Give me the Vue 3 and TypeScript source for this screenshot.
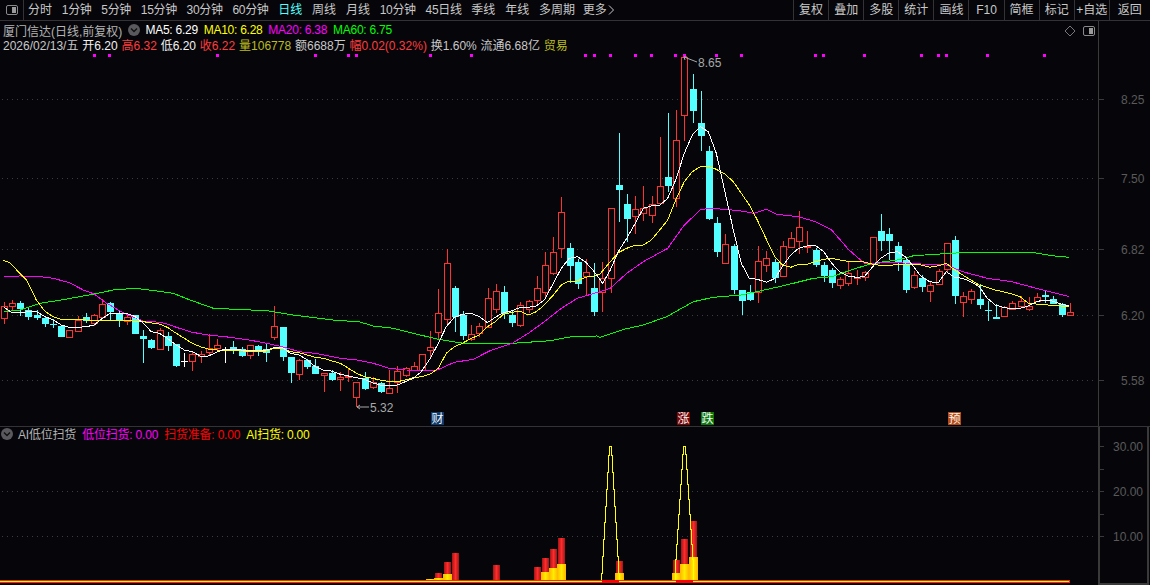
<script setup lang="ts">
type Kind = 'R' | 'C' | 'W'
type Raw = [Kind, number, number, number, number]
interface Candle { i: number; kind: Kind; c: number; top: number; bot: number; hi: number; lo: number }

const blockA: Raw[] = [
  ['R',108,143,96,162],['R',100,107,90,122],['C',99,116,93,137],['C',120,141,115,150],['C',135,145,120,150],
  ['C',144,162,140,171],['C',162,164,148,174],['C',168,201,165,201],['R',181,201,179,204],['R',150,183,137,185],
  ['C',141,152,129,158],['R',136,160,133,167],['R',102,140,88,145],['C',99,126,97,152],['C',130,151,119,171],
  ['R',142,152,135,166],['C',135,192,135,192],['C',198,207,180,279],['C',210,234,208,238],['R',181,236,174,238],
  ['C',198,228,186,243],['C',222,288,222,292],['W',272,274,248,291],['R',253,272,243,303],['R',253,259,243,279],
  ['R',233,245,193,259],['R',226,233,207,240],['W',237,239,232,279],['C',231,241,213,252],['C',238,258,231,262],
  ['R',226,255,226,267],['C',228,242,226,259],['C',238,250,222,276],['R',168,200,108,211],['C',171,261,171,272],
  ['C',261,309,261,339],['R',270,311,268,331],['C',270,291,268,297],['C',288,312,266,312],['R',310,314,308,366],
  ['C',308,330,300,332],['R',322,326,306,363],['R',318,321,297,336]
]
const blockB: Raw[] = [
  ['R',547,590,547,620],['C',535,567,517,570],['R',545,560,530,567],['C',548,576,545,579],['R',565,578,510,583],
  ['R',514,545,498,578],['R',503,524,500,530],['R',499,510,487,512],['R',463,510,463,512],['R',442,449,393,471],
  ['R',340,397,267,420],['R',190,358,148,372],['C',265,350,259,396],['C',346,407,334,419],['R',403,416,376,423],
  ['R',379,398,369,412],['R',295,381,265,383],['R',274,326,252,340],['C',277,343,258,358],['C',345,369,330,380],
  ['R',316,376,305,382],['R',304,327,300,340],['R',265,299,228,315],['R',196,275,157,290],['R',157,218,112,226],
  ['R',37,143,-10,175],['C',145,197,129,250],['C',187,251,177,267],['R',217,227,178,285],['C',264,335,190,347]
]
const blockC: Raw[] = [
  ['R',685,727,636,785],['R',475,685,475,728],['C',405,419,249,515],['C',462,506,433,575],['R',478,497,438,552],
  ['R',475,490,408,513],['R',463,496,438,518],['R',409,460,262,462],['C',381,408,189,425],['R',271,445,180,470],
  ['R',22,196,22,272],['C',117,183,71,218],['C',219,258,122,303],['C',303,507,288,510],['C',519,605,500,620],
  ['R',583,640,552,640],['C',588,719,582,733],['C',720,752,720,794],['C',726,750,705,753],['R',634,727,588,758]
]
const blockD: Raw[] = [
  ['R',175,196,153,215],['C',186,234,178,250],['R',139,228,123,230],['R',115,140,96,143],['R',82,124,34,161],
  ['R',138,142,94,160],['C',150,194,143,200],['C',195,228,186,245],['C',210,248,204,263],['R',238,254,231,267],
  ['R',220,248,186,258],['R',230,235,210,255],['R',217,230,212,243],['R',112,193,112,197],['C',94,122,43,153],
  ['C',102,122,85,180],['C',138,190,126,213],['C',180,269,175,278],['R',226,260,212,268],['C',234,261,226,276],
  ['R',256,272,243,306],['R',214,251,207,252],['R',130,206,128,216],['C',120,287,108,312],['R',287,307,277,350],
  ['R',273,298,268,312],['C',297,315,253,327],['C',330,332,302,362],['C',351,358,313,358],['R',320,347,318,348],
  ['R',310,326,304,330],['R',303,317,287,325],['R',318,326,290,333],['R',290,302,280,305],['C',286,290,269,308],
  ['C',297,311,289,312],['C',311,344,309,351],['R',337,346,310,346]
]

const blocks: Array<[number, Raw[]]> = [[270, blockA], [200, blockB], [50, blockC], [200, blockD]]
const candles: Candle[] = []
blocks.forEach(([y0, rows]) => {
  rows.forEach((r) => {
    const i = candles.length
    const py = (v: number) => Math.round(y0 + v / 3)
    candles.push({ i, kind: r[0], c: Math.floor(4.3 + 8.2 * i), top: py(r[1]), bot: py(r[2]), hi: py(r[3]), lo: py(r[4]) })
  })
})

function seg(x0: number, y0: number, xs: number[], from: number, to: number): string[] {
  const out: string[] = []
  for (let k = 0; k < xs.length; k += 2) {
    const X = x0 + xs[k] / 3
    if (X >= from && X < to) out.push(`${X.toFixed(1)},${(y0 + xs[k + 1] / 3).toFixed(1)}`)
  }
  return out
}
function ma(a: number[], b: number[], c: number[], d: number[], lead: string[] = []): string {
  return [
    ...lead,
    ...seg(0, 270, a, 0, 352),
    ...seg(340, 200, b, 352, 600),
    ...seg(600, 50, c, 600, 762),
    ...seg(760, 200, d, 762, 1100)
  ].join(' ')
}

const lines = [
  { id: 'ma60', color: '#00ff00', points: ma(
    [13,125,61,120,120,100,184,90,283,72,340,60,406,55,470,63,520,70,570,90,640,115,800,122,880,135,1000,150,1080,160],
    [60,366,100,378,160,385,220,400,295,418,370,430,520,430,630,422,700,409,770,408],
    [0,862,72,838,130,825,200,800,280,755,340,742,424,735,500,720],
    [0,272,50,262,100,250,160,235,215,230,289,205,338,190,412,180,461,167,620,157,815,157,850,163,890,169,928,172]) },
  { id: 'ma20', color: '#ff00ff', points: ma(
    [13,19,61,18,120,20,160,25,208,38,250,60,283,72,320,100,355,120,379,133,430,153,478,157,502,162,529,172,577,187,625,195,676,200,748,210,799,220,847,230,898,245,946,250,1021,265],
    [50,480,100,490,148,505,196,510,290,511,343,487,400,478,450,452,517,430,565,400,613,365,664,325,712,295,763,280],
    [0,725,31,715,80,670,130,635,203,595,253,525,301,480,325,475,376,478,424,483,461,490],
    [0,30,20,28,50,43,116,50,166,65,215,90,265,148,313,190,412,188,484,192,559,195,608,215,682,235,755,245,829,265,928,290]) },
  { id: 'ma10', color: '#ffff00', points: ma(
    [50,0,80,30,109,90,136,125,160,140,184,148,232,148,283,152,331,152,379,152,430,155,478,162,502,172,529,190,553,205,577,220,601,230,625,237,652,240,700,240,748,245,799,243,823,235,847,235,871,245,898,248,922,255,946,262,970,265,994,272,1021,280],
    [50,520,73,530,121,540,148,545,172,545,196,540,220,533,244,530,271,522,295,505,319,460,343,440,367,430,394,415,418,405,442,380,466,365,490,343,517,337,541,333,565,345,589,335,613,315,640,285,664,255,688,243,712,243,736,232,763,228],
    [0,672,31,635,55,608,80,595,106,585,130,585,154,570,179,540,203,510,227,450,253,395,277,365,301,350,325,349,349,358,376,373,400,395,424,430,448,465,472,510],
    [0,70,20,120,45,170,67,195,92,202,116,193,140,193,166,185,191,178,215,175,239,180,265,184,313,186,338,193,362,196,388,196,412,194,436,192,461,193,484,195,509,202,535,197,559,190,584,210,608,225,632,240,658,255,682,262,706,270,730,275,755,282,781,290,805,310,829,312,853,314,877,316,904,318,928,318],
    ['3,260', '10,263']) },
  { id: 'ma5', color: '#ffffff', points: ma(
    [13,113,37,128,61,128,85,125,109,125,136,140,160,150,184,165,208,172,232,172,259,170,283,165,307,145,331,130,355,130,379,130,406,140,430,160,454,185,478,190,502,205,529,225,553,240,577,245,601,258,625,258,652,246,676,238,700,238,724,240,748,242,775,243,799,240,823,233,847,232,871,250,898,255,922,270,946,290,970,300,994,303,1021,313],
    [50,533,73,538,97,548,121,555,148,558,172,555,196,545,220,535,244,515,271,475,295,430,319,380,343,352,367,343,394,340,418,350,442,368,466,352,490,338,517,332,541,322,565,322,589,318,613,300,640,250,664,205,688,175,712,170,736,185,763,215],
    [8,700,31,660,55,605,80,565,106,520,130,475,154,468,179,466,203,445,227,390,253,310,277,255,301,230,325,245,349,310,376,430,400,540,424,640,448,685,472,688],
    [0,240,20,247,45,235,67,200,92,165,116,145,140,138,166,136,191,155,215,190,239,215,265,228,289,232,313,230,338,200,362,175,388,158,412,155,436,170,461,200,484,230,509,245,535,248,559,215,584,232,608,235,632,245,658,260,682,295,706,315,730,322,755,327,781,325,805,318,829,305,853,300,877,303,904,312,928,318]) }
]

const gridY = [99, 178, 249, 315, 380]
const pricesY: Array<[string, number]> = [['8.25', 99], ['7.50', 178], ['6.82', 249], ['6.20', 315], ['5.58', 380]]
const markerX = [93, 108, 216, 314, 347, 355, 429, 470, 584, 593, 609, 634, 650, 674, 683, 715, 740, 814, 822, 863, 920, 937, 945, 986, 1043]

const badges = [
  { ch: '财', x: 431, fill: '#0b3a6e' },
  { ch: '涨', x: 677, fill: '#7a0505' },
  { ch: '跌', x: 701, fill: '#087a08' },
  { ch: '预', x: 948, fill: '#b64a12' }
]

const tabs = ['分时', '1分钟', '5分钟', '15分钟', '30分钟', '60分钟', '日线', '周线', '月线', '10分钟', '45日线', '季线', '年线', '多周期']
const actions = ['复权', '叠加', '多股', '统计', '画线', 'F10', '简框', '标记', '+自选', '返回']
const hasDigit = (t: string) => /\d/.test(t)

const barX = (i: number) => Math.floor(4.3 + 8.2 * i)
const redBars: Array<[number, number]> = [[52, 579], [53, 573], [54, 562], [55, 553], [60, 565], [65, 567], [66, 558], [67, 549], [68, 538], [75, 561], [82, 560], [83, 539], [84, 521]]
const yellowBars: Array<[number, number]> = [[52, 579], [53, 578], [54, 574], [66, 572], [67, 568], [68, 564], [75, 573], [82, 573], [83, 564], [84, 557]]

function stair(cx: number, ys: number[]): string {
  let d = `M${cx - ys.length + 1.5} ${ys[0]}`
  const n = ys.length - 1
  for (let k = 0; k < n; k++) {
    d += `V${ys[k + 1]}H${cx - n + k + 1.5}`
  }
  for (let k = n; k > 0; k--) {
    d += `H${cx + (n - k) + 1.5}V${ys[k - 1]}`
  }
  return d
}
const peaks = [
  stair(610, [580, 573, 556, 539, 522, 506, 489, 472, 455, 446]),
  stair(684, [580, 559, 544, 529, 514, 499, 484, 469, 454, 446])
]
const subGridY = [491, 536]
const subLabels: Array<[string, number]> = [['30.00', 446], ['20.00', 491], ['10.00', 536]]
const subTicks = [446, 469, 491, 514, 536]
</script>

<template>
  <div class="screen">
    <header class="toolbar">
      <div class="layout-btn"><span class="layout-icon"><i></i></span></div>
      <nav class="tabs">
        <span v-for="t in tabs" :key="t" class="tab" :class="{ active: t === '日线', numeric: hasDigit(t) }">{{ t }}</span>
        <span class="tab more">更多 <svg width="7" height="10" viewBox="0 0 7 10"><path d="M1 .5 5.500 5 1 9.500" fill="none" stroke="#c8c8c8" /></svg></span>
      </nav>
      <div class="actions">
        <span v-for="a in actions" :key="a" class="action">{{ a }}</span>
      </div>
    </header>

    <section class="main-panel">
      <div class="chart-wrap">
        <svg class="chart" width="1098" height="405" viewBox="0 21 1098 405">
          <g class="grid">
            <line v-for="y in gridY" :key="y" x1="2" x2="1096" :y1="y + 0.5" :y2="y + 0.5" />
          </g>
          <rect v-for="x in markerX" :key="x" :x="x" y="54" width="3" height="3" fill="#ff00ff" />
          <g v-for="k in candles" :key="k.i" shape-rendering="crispEdges">
            <template v-if="k.kind === 'R'">
              <line :x1="k.c + 0.5" :x2="k.c + 0.5" :y1="k.hi" :y2="k.top" stroke="#ff3232" />
              <line :x1="k.c + 0.5" :x2="k.c + 0.5" :y1="k.bot" :y2="k.lo" stroke="#ff3232" />
              <rect :x="k.c - 2.5" :y="k.top + 0.5" width="6" :height="Math.max(1, k.bot - k.top)" fill="#06060a" stroke="#ff3232" />
            </template>
            <template v-else-if="k.kind === 'C'">
              <line :x1="k.c + 0.5" :x2="k.c + 0.5" :y1="k.hi" :y2="k.lo" stroke="#54ffff" />
              <rect :x="k.c - 3" :y="k.top" width="7" :height="Math.max(1, k.bot - k.top)" fill="#54ffff" />
            </template>
            <template v-else>
              <line :x1="k.c + 0.5" :x2="k.c + 0.5" :y1="k.hi" :y2="k.lo" stroke="#ffffff" />
              <rect :x="k.c - 3" :y="k.top" width="7" height="1" fill="#ffffff" />
            </template>
          </g>
          <polyline v-for="l in lines" :key="l.id" :points="l.points" fill="none" :stroke="l.color" shape-rendering="crispEdges" />
          <g class="note">
            <path d="M684 57 697 62M684 57h3M684 57l1 3" />
            <text x="698" y="67">8.65</text>
            <path d="M357 407H369M357 407l3-2M357 407l3 2" />
            <text x="370" y="412">5.32</text>
          </g>
          <g v-for="b in badges" :key="b.ch">
            <rect :x="b.x" y="412" width="13" height="13" :fill="b.fill" />
            <text class="badge-text" :x="b.x + 6.5" y="423" text-anchor="middle">{{ b.ch }}</text>
          </g>
        </svg>
        <div class="info">
          <div class="info-row first">
            <span class="name">厦门信达(日线,前复权)</span>
            <span class="drop"><svg width="12" height="12" viewBox="0 0 12 12"><circle cx="6" cy="6" r="6" fill="#5a5a5e" /><path d="M3 4.500 6 7.500 9 4.500" fill="none" stroke="#111" stroke-width="1.400" /></svg></span>
            <span class="ma white">MA5: 6.29</span>
            <span class="ma yellow">MA10: 6.28</span>
            <span class="ma magenta">MA20: 6.38</span>
            <span class="ma green">MA60: 6.75</span>
          </div>
          <div class="info-row second">
            <span>2026/02/13/五</span>
            <span class="bright">开6.20</span>
            <span class="red">高6.32</span>
            <span class="bright">低6.20</span>
            <span class="red">收6.22</span>
            <span class="olive">量106778</span>
            <span>额6688万</span>
            <span class="red">幅0.02(0.32%)</span>
            <span>换1.60%</span>
            <span>流通6.68亿</span>
            <span class="olive">贸易</span>
          </div>
        </div>
        <div class="corner-tools">
          <svg width="12" height="12" viewBox="0 0 12 12"><path d="M6 1 11 6 6 11 1 6Z" fill="none" stroke="#777" /></svg>
          <span class="layout-icon"><i></i></span>
        </div>
      </div>
      <svg class="axis" width="52" height="405" viewBox="1098 21 52 405">
        <line x1="1098.5" x2="1098.500" y1="21" y2="426" class="axis-line" />
        <g v-for="p in pricesY" :key="p[0]">
          <line x1="1099" x2="1104" :y1="p[1] + 0.5" :y2="p[1] + 0.5" class="axis-line" />
          <text x="1121" :y="p[1] + 5" class="axis-text">{{ p[0] }}</text>
        </g>
      </svg>
    </section>

    <section class="sub-panel">
      <div class="chart-wrap">
        <svg class="chart" width="1098" height="158" viewBox="0 427 1098 158">
          <defs>
            <linearGradient id="redBar" x1="0" x2="1" y1="0" y2="0">
              <stop offset="0" stop-color="#a51414" />
              <stop offset="0.5" stop-color="#ff2c2c" />
              <stop offset="1" stop-color="#a51414" />
            </linearGradient>
            <linearGradient id="goldBar" x1="0" x2="1" y1="0" y2="0">
              <stop offset="0" stop-color="#ffb400" />
              <stop offset="0.5" stop-color="#ffec00" />
              <stop offset="1" stop-color="#ffb400" />
            </linearGradient>
          </defs>
          <g class="grid">
            <line v-for="y in subGridY" :key="y" x1="2" x2="1096" :y1="y + 0.5" :y2="y + 0.5" />
          </g>
          <rect v-for="b in redBars" :key="b[0]" :x="barX(b[0]) - 3" :y="b[1]" width="7" :height="581 - b[1]" fill="url(#redBar)" />
          <rect v-for="b in yellowBars" :key="b[0]" :x="barX(b[0]) - 4" :y="b[1]" width="9" :height="581 - b[1]" fill="url(#goldBar)" />
          <rect x="0" y="580" width="1070" height="3" fill="#ff1e1e" />
          <rect x="0" y="581" width="1069" height="1" fill="#ffff00" />
          <rect x="602" y="580" width="17" height="3" fill="#ff0000" />
          <rect x="676" y="580" width="17" height="3" fill="#ff0000" />
          <path v-for="(d, n) in peaks" :key="n" :d="d" fill="none" stroke="#ffff00" shape-rendering="crispEdges" />
        </svg>
        <div class="sub-title">
          <span class="drop"><svg width="12" height="12" viewBox="0 0 12 12"><circle cx="6" cy="6" r="6" fill="#5a5a5e" /><path d="M3 4.500 6 7.500 9 4.500" fill="none" stroke="#111" stroke-width="1.400" /></svg></span>
          <span class="name">AI低位扫货</span>
          <span class="magenta">低位扫货: 0.00</span>
          <span class="pure-red">扫货准备: 0.00</span>
          <span class="yellow">AI扫货: 0.00</span>
        </div>
      </div>
      <svg class="axis" width="52" height="158" viewBox="1098 427 52 158">
        <path d="M1099 427V584H1148V427" class="axis-box" />
        <line v-for="t in subTicks" :key="t" x1="1100" x2="1104" :y1="t + 0.5" :y2="t + 0.5" class="axis-line" />
        <text v-for="s in subLabels" :key="s[0]" x="1113" :y="s[1] + 5" class="axis-text">{{ s[0] }}</text>
      </svg>
    </section>
  </div>
</template>

<style>
html, body { margin: 0; background: #06060a; }
</style>

<style scoped>
.screen {
  width: 1150px;
  height: 585px;
  overflow: hidden;
  background: #06060a;
  color: #c8c8c8;
  font-family: "Liberation Sans", "Noto Sans CJK SC", sans-serif;
  font-size: 12px;
  display: flex;
  flex-direction: column;
}
.toolbar {
  height: 20px;
  flex: none;
  display: flex;
  align-items: stretch;
  border-bottom: 1px solid #333336;
}
.layout-btn {
  width: 23px;
  flex: none;
  display: flex;
  align-items: center;
  justify-content: center;
  border-right: 1px solid #333336;
}
.layout-icon {
  display: block;
  width: 10px;
  height: 8px;
  border: 1px solid #8a8a8a;
  border-radius: 2px;
  position: relative;
}
.layout-icon i {
  position: absolute;
  right: 1px;
  top: 1px;
  bottom: 1px;
  width: 4px;
  background: #9a9a9a;
}
.tabs {
  display: flex;
  align-items: center;
  gap: 9.800px;
  padding-left: 4px;
  flex: 1;
  white-space: nowrap;
}
.tab { line-height: 20px; }
.tab.numeric { letter-spacing: -0.33px; }
.tab.active { color: #54ffff; }
.more { display: flex; align-items: center; gap: 1px; margin-left: -2px; }
.actions {
  display: flex;
  flex: none;
  width: 357px;
}
.action {
  width: 35.100px;
  flex: none;
  box-sizing: border-box;
  text-align: center;
  line-height: 20px;
  border-left: 1px solid #333336;
  white-space: nowrap;
}
.action:last-child { width: 41px; }
.main-panel {
  height: 405px;
  flex: none;
  display: flex;
  border-bottom: 1px solid #333336;
}
.sub-panel {
  height: 158px;
  flex: none;
  display: flex;
}
.chart-wrap {
  position: relative;
  width: 1098px;
  flex: none;
}
.chart, .axis { display: block; flex: none; }
.grid line {
  stroke: #3c3c3c;
  stroke-dasharray: 1 4;
  shape-rendering: crispEdges;
}
.note path { fill: none; stroke: #a8a8a8; }
.note text { fill: #a8a8a8; font-size: 12px; }
.badge-text { fill: #f4f4f4; font-size: 12px; }
.axis-line { stroke: #3a3a3a; shape-rendering: crispEdges; }
.axis-box { fill: none; stroke: #3a3a3a; stroke-width: 2; shape-rendering: crispEdges; }
.axis-text { fill: #5a5a5a; font-size: 12px; }
.info {
  position: absolute;
  left: 3px;
  top: 2px;
  white-space: nowrap;
}
.info-row {
  display: flex;
  align-items: center;
  height: 14px;
}
.info-row.first { gap: 5.800px; }
.info-row.first .drop { margin-right: -0.500px; }
.info-row.first .ma { letter-spacing: -0.25px; }
.info-row.second { gap: 3.850px; }
.drop { display: inline-flex; }
.name { color: #b4b4b4; }
.bright { color: #f2f2f2; }
.white { color: #fff; }
.yellow { color: #ffff00; }
.magenta { color: #ff00ff; }
.green { color: #00ff00; }
.red { color: #ff3c3c; }
.pure-red { color: #ff0000; }
.olive { color: #bcbc1e; }
.corner-tools {
  position: absolute;
  right: 3px;
  top: 4px;
  display: flex;
  align-items: center;
  gap: 7px;
}
.sub-title {
  position: absolute;
  left: 1px;
  top: -1px;
  height: 15px;
  display: flex;
  align-items: center;
  gap: 6px;
  letter-spacing: -0.2px;
  white-space: nowrap;
}
.sub-title .drop { margin-right: -1px; }
</style>
